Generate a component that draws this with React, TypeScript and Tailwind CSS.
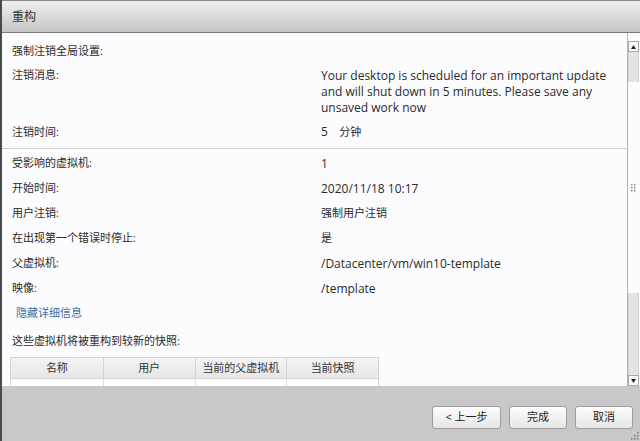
import React from 'react';

const rows = [
  ['受影响的虚拟机:', '1', true],
  ['开始时间:', '2020/11/18 10:17', true],
  ['用户注销:', '强制用户注销', false],
  ['在出现第一个错误时停止:', '是', false],
  ['父虚拟机:', '/Datacenter/vm/win10-template', true],
  ['映像:', '/template', true],
] as const;

const cols = ['名称', '用户', '当前的父虚拟机', '当前快照'];

function Arrow({ up }: { up?: boolean }) {
  return (
    <div className="h-[11px] w-[11px] border border-[#a8a8a8] bg-[#fafafa] flex items-center justify-center">
      <svg width="5" height="4" viewBox="0 0 5 4">
        {up ? <polygon points="2.5,0 5,4 0,4" fill="#222" /> : <polygon points="0,0 5,0 2.5,4" fill="#222" />}
      </svg>
    </div>
  );
}

function Button({ label, w }: { label: string; w: string }) {
  return (
    <button className={`${w} h-[23px] rounded-[3px] border border-[#9c9c9c] bg-gradient-to-b from-[#fdfdfd] to-[#e6e6e6] text-[11px] text-[#222] flex items-center justify-center`}>
      {label}
    </button>
  );
}

export default function App() {
  return (
    <div
      className="w-[640px] h-[441px] flex flex-col border-l-2 border-[#4a4a4a] overflow-hidden text-[11px] text-[#2a2a2a]"
      style={{ fontFamily: '"Open Sans", "Noto Sans CJK SC", sans-serif' }}
    >
      {/* title bar */}
      <div className="h-[33px] shrink-0 border-t border-[#8a8a8a] border-b border-b-[#7a7a7a] bg-gradient-to-b from-[#efefef] to-[#c6c6c6] flex items-center pl-[10px]">
        <span className="text-[12px] text-[#333]">重构</span>
      </div>

      {/* body */}
      <div className="flex-1 flex bg-[#fcfcfe] overflow-hidden">
        <div className="flex-1 pt-[10px] overflow-hidden">
          <div className="pl-[10px] h-[16px] leading-[16px]">强制注销全局设置:</div>
          <div className="mt-[8px] flex leading-[16px]">
            <div className="w-[319px] pl-[10px] shrink-0">注销消息:</div>
            <div className="w-[290px] pt-[1px] text-[12px]">
              Your desktop is scheduled for an important update and will shut down in 5 minutes. Please save any unsaved work now
            </div>
          </div>
          <div className="mt-[8px] flex leading-[16px]">
            <div className="w-[319px] pl-[10px] shrink-0">注销时间:</div>
            <div><span className="text-[12px]">5</span>&nbsp;&nbsp;&nbsp;&nbsp;分钟</div>
          </div>
          <div className="mt-[8px] h-px bg-[#cfcfcf]" />
          <div className="mt-[2px]">
            {rows.map(([k, v, latin]) => (
              <div key={k} className="flex h-[25px] items-center">
                <div className="w-[319px] pl-[10px] shrink-0">{k}</div>
                <div className={latin ? 'text-[12px]' : ''}>{v}</div>
              </div>
            ))}
          </div>
          <div className="h-[25px] flex items-center pl-[14px] text-[#3d6f9e]">隐藏详细信息</div>
          <div className="mt-[7px] pl-[10px] h-[16px] leading-[16px]">这些虚拟机将被重构到较新的快照:</div>
          <div className="mt-[8px] ml-[8px] w-[369px] border border-[#d4d4d4]">
            <div className="grid grid-cols-4 h-[21px] bg-gradient-to-b from-[#f4f4f4] to-[#e6e6e6] border-b border-[#d4d4d4]">
              {cols.map((c, i) => (
                <div key={c} className={`flex items-center justify-center text-[#333] ${i > 0 ? 'border-l border-[#d4d4d4]' : ''}`}>
                  {c}
                </div>
              ))}
            </div>
            <div className="grid grid-cols-4 h-[20px] bg-white">
              {cols.map((c, i) => (
                <div key={c} className={i > 0 ? 'border-l border-[#e2e2e2]' : ''} />
              ))}
            </div>
          </div>
        </div>

        {/* scrollbar */}
        <div className="w-[13px] shrink-0 border-l border-[#b4b4b4] pt-[8px] pr-[1px] flex flex-col">
          <Arrow up />
          <div className="h-[30px] w-[11px] bg-[#e4e4e4] border-x border-[#cfcfcf]" />
          <div className="flex-1 w-[11px] flex items-center justify-center">
            <svg width="5" height="8" viewBox="0 0 5 8">
              <rect x="0" y="0" width="1.5" height="1.5" fill="#888" />
              <rect x="3" y="0" width="1.5" height="1.5" fill="#888" />
              <rect x="0" y="3" width="1.5" height="1.5" fill="#888" />
              <rect x="3" y="3" width="1.5" height="1.5" fill="#888" />
              <rect x="0" y="6" width="1.5" height="1.5" fill="#888" />
              <rect x="3" y="6" width="1.5" height="1.5" fill="#888" />
            </svg>
          </div>
          <div className="h-[82px] w-[11px] bg-[#e4e4e4] border-x border-[#cfcfcf]" />
          <Arrow />
        </div>
      </div>

      {/* footer */}
      <div className="h-[55px] shrink-0 bg-[#c9c7c9] relative flex items-start justify-end pt-[20px] pr-[7px] gap-[8px]">
        <Button label="< 上一步" w="w-[69px]" />
        <Button label="完成" w="w-[58px]" />
        <Button label="取消" w="w-[58px]" />
        <svg className="absolute right-[1px] bottom-[1px]" width="8" height="8" viewBox="0 0 8 8">
          <rect x="6" y="0" width="1.5" height="1.5" fill="#777" />
          <rect x="3" y="3" width="1.5" height="1.5" fill="#777" />
          <rect x="6" y="3" width="1.5" height="1.5" fill="#777" />
          <rect x="0" y="6" width="1.5" height="1.5" fill="#777" />
          <rect x="3" y="6" width="1.5" height="1.5" fill="#777" />
          <rect x="6" y="6" width="1.5" height="1.5" fill="#777" />
        </svg>
      </div>
    </div>
  );
}
